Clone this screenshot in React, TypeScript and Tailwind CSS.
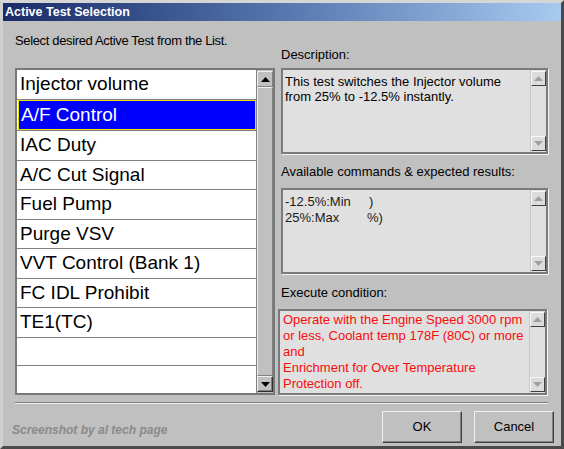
const tests = [
  "Injector volume",
  "A/F Control",
  "IAC Duty",
  "A/C Cut Signal",
  "Fuel Pump",
  "Purge VSV",
  "VVT Control (Bank 1)",
  "FC IDL Prohibit",
  "TE1(TC)",
  "",
  "",
]

function Arrow({ up, color }: { up?: boolean; color: string }) {
  return (
    <svg width="9" height="5" viewBox="0 0 9 5">
      <polygon points={up ? "4.5,0 9,5 0,5" : "0,0 9,0 4.5,5"} fill={color} />
    </svg>
  )
}

function ListScrollbar() {
  return (
    <div className="flex w-[16px] flex-col bg-[#c0c0c0] py-[1px]">
      <div className="flex h-[16px] items-center justify-center border border-t-[#f0f0f0] border-l-[#f0f0f0] border-b-[#808080] border-r-[#808080]">
        <Arrow up color="#000" />
      </div>
      <div className="flex-1 border border-t-[#f0f0f0] border-l-[#f0f0f0] border-b-[#808080] border-r-[#808080]" />
      <div className="flex h-[16px] items-center justify-center border border-t-[#f0f0f0] border-l-[#f0f0f0] border-b-[#303030] border-r-[#303030] shadow-[inset_-1px_-1px_0_#808080]">
        <Arrow color="#000" />
      </div>
    </div>
  )
}

function BoxScrollbar() {
  return (
    <div className="flex w-[16px] flex-col justify-between border-l border-[#c8c8c8] py-[1px]">
      <div className="flex h-[15px] items-center justify-center border border-t-[#f8f8f8] border-l-[#f8f8f8] border-b-[#404040] border-r-[#404040] bg-[#dcdcdc]">
        <Arrow up color="#a0a0a0" />
      </div>
      <div className="flex h-[15px] items-center justify-center border border-t-[#f8f8f8] border-l-[#f8f8f8] border-b-[#404040] border-r-[#404040] bg-[#dcdcdc]">
        <Arrow color="#a0a0a0" />
      </div>
    </div>
  )
}

function TextBox({ className, children }: { className: string; children: React.ReactNode }) {
  return (
    <div
      className={`flex h-[86px] border-2 border-[#7a7a7a] bg-[#e0e0e0] shadow-[1px_1px_0_#f4f4f4] ${className}`}
    >
      <div className="flex-1 overflow-hidden">{children}</div>
      <BoxScrollbar />
    </div>
  )
}

export default function App() {
  const selected = 1

  return (
    <div className="flex h-[449px] w-[564px] flex-col border-t-[3px] border-l-[3px] border-r-[3px] border-b-[3px] border-t-[#d6d6d6] border-l-[#d0d0d0] border-r-[#4a4a4a] border-b-[#4a4a4a] bg-[#c0c0c0] font-['Liberation_Sans',Arial,sans-serif] text-black">
      {/* title bar */}
      <div className="h-[18px] bg-gradient-to-r from-[#1a2b68] via-[#5676ae] to-[#a8caf0] pl-[2px] text-[12.5px] leading-[18px] font-bold text-white">
        Active Test Selection
      </div>

      <div className="flex flex-1 flex-col pt-[13px] pl-[12px] pr-[7px]">
        <div className="h-[14px] pl-[-1px] text-[13px] leading-[14px] tracking-[-0.35px]">
          Select desired Active Test from the List.
        </div>

        <div className="mr-[6px] flex gap-[3px]">
          {/* test list */}
          <div className="mt-[20px] flex h-[327px] w-[260px] border-2 border-[#787878]">
            <div className="flex flex-1 flex-col border-r border-[#808080] bg-white">
              {tests.map((t, i) => (
                <div
                  key={i}
                  className={`flex-1 text-[19px] ${i < tests.length - 1 ? "border-b border-[#808080]" : ""}`}
                >
                  {i === selected ? (
                    <div className="ml-[1px] flex h-full items-center border border-[#ece400] bg-[#0000ff] pl-[2px] text-white">
                      {t}
                    </div>
                  ) : (
                    <div className="flex h-full items-center pl-[3px]">{t}</div>
                  )}
                </div>
              ))}
            </div>
            <ListScrollbar />
          </div>

          {/* detail panes */}
          <div className="flex flex-1 flex-col text-[13px]">
            <div className="ml-[3px] h-[14px] leading-[14px]">Description:</div>
            <TextBox className="mt-[6px] ml-[3px]">
              <div className="pt-[4px] pl-[2px] leading-[15px]">
                This test switches the Injector volume
                <br />
                from 25% to -12.5% instantly.
              </div>
            </TextBox>

            <div className="mt-[11px] ml-[3px] h-[14px] leading-[14px]">
              Available commands &amp; expected results:
            </div>
            <TextBox className="mt-[9px] ml-[3px]">
              <div className="grid grid-cols-[84px_1fr] pt-[4px] pl-[2px] leading-[16px] text-[#201a14]">
                <span>-12.5%:Min</span>
                <span>)</span>
                <span>25%:Max</span>
                <span className="-ml-[2px]">%)</span>
              </div>
            </TextBox>

            <div className="mt-[12px] ml-[3px] h-[14px] leading-[14px]">Execute condition:</div>
            <TextBox className="mt-[9px] mr-[1px]">
              <div className="pt-[1px] pl-[3px] leading-[16px] whitespace-nowrap text-[#f80c0c]">
                Operate with the Engine Speed 3000 rpm
                <br />
                or less, Coolant temp 178F (80C) or more
                <br />
                and
                <br />
                Enrichment for Over Temperature
                <br />
                Protection off.
              </div>
            </TextBox>
          </div>
        </div>

        {/* groove */}
        <div className="mt-[7px] mr-[6px] h-[2px] border-t border-b border-t-[#808080] border-b-[#f0f0f0]" />

        <div className="mt-[7px] flex items-center justify-between">
          <div className="-ml-[3px] mt-[5px] text-[12px] font-bold italic text-[#8a8a8a]">
            Screenshot by al tech page
          </div>
          <div className="flex gap-[12px] text-[13px]">
            <button className="h-[32px] w-[80px] border border-t-[#f0f0f0] border-l-[#f0f0f0] border-b-[#404040] border-r-[#404040] bg-[#c0c0c0] shadow-[inset_-1px_-1px_0_#808080]">
              OK
            </button>
            <button className="h-[32px] w-[80px] border border-t-[#f0f0f0] border-l-[#f0f0f0] border-b-[#404040] border-r-[#404040] bg-[#c0c0c0] shadow-[inset_-1px_-1px_0_#808080]">
              Cancel
            </button>
          </div>
        </div>
      </div>
    </div>
  )
}
